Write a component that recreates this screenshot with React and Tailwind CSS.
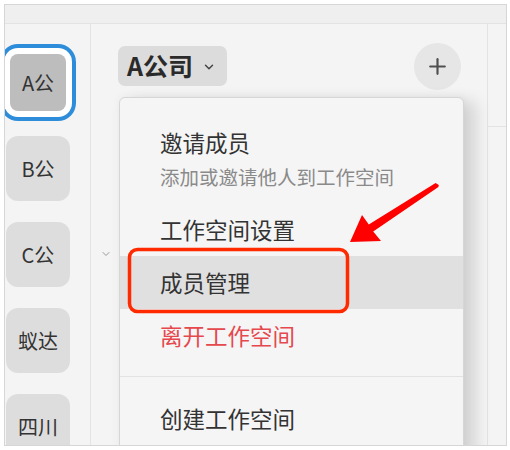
import { Plus, ChevronDown } from "lucide-react";

const companies = [
  { name: "A公", active: true },
  { name: "B公" },
  { name: "C公" },
  { name: "蚁达" },
  { name: "四川" },
];

// Sidebar company tile
const Tile = ({ name, active }) => {
  if (active) {
    return (
      <div className="w-[64px] h-[65px] flex items-center justify-center shrink-0">
        <div className="w-[56px] h-[57px] rounded-[8px] bg-[#bdbdbd] flex items-center justify-center text-[20px] text-[#333] shadow-[0_0_0_6px_#ffffff,0_0_0_10px_#2d8ddb]">
          {name}
        </div>
      </div>
    );
  }
  return (
    <div className="w-[64px] h-[65px] rounded-[12px] bg-[#dddddd] flex items-center justify-center text-[20px] text-[#333] shrink-0">
      {name}
    </div>
  );
};

export default function App() {
  return (
    <div
      className="w-[510px] h-[450px] bg-white pt-[4px] pl-[4px] overflow-hidden"
      style={{ fontFamily: '"Noto Sans CJK SC", "Noto Sans", sans-serif' }}
    >
      <div className="relative w-[503px] h-[442px] border-[1.5px] border-[#d6d6d6] bg-[#f4f4f4] overflow-hidden flex flex-col">
        {/* top bar */}
        <div className="h-[19px] shrink-0 bg-[#efefef] border-b border-[#e3e3e3]" />

        <div className="flex flex-1 min-h-0">
          {/* sidebar */}
          <div className="w-[86px] shrink-0 border-r border-[#e3e3e3] pl-[1px] pt-[26px] flex flex-col gap-[21px]">
            {companies.map((c) => (
              <Tile key={c.name} {...c} />
            ))}
          </div>

          {/* main */}
          <div className="w-[397px] shrink-0 border-r border-[#e3e3e3] flex flex-col">
            <div className="h-[84px] flex items-center justify-between pl-[27px] pr-[26px]">
              <button className="h-[40px] pl-[9px] pr-[11px] rounded-[7px] bg-[#dcdcdc] flex items-center gap-[9px] text-[25px] font-bold text-[#2a2a2a]">
                A公司
                <ChevronDown size={14} strokeWidth={2.5} className="text-[#444] mt-[2px]" />
              </button>
              <button className="w-[47px] h-[47px] rounded-full bg-[#e6e6e6] flex items-center justify-center text-[#505050]">
                <Plus size={25} strokeWidth={2.1} />
              </button>
            </div>
            <div className="pl-[9px] pt-[140px]">
              <ChevronDown size={12} strokeWidth={1.8} className="text-[#8e8e8e]" />
            </div>
          </div>

          {/* right column */}
          <div className="flex-1 flex flex-col">
            <div className="h-[103px] border-b border-[#e3e3e3]" />
          </div>
        </div>

        {/* dropdown menu */}
        <div className="absolute left-[114px] top-[92px] w-[345px] h-[400px] bg-[#f5f5f5] border border-[#d6d6d6] rounded-[6px] shadow-[12px_4px_16px_rgba(0,0,0,0.13),0_0_10px_rgba(0,0,0,0.05)] text-[#333]">
          <div className="h-[105px] pl-[40px] pt-[29px] flex flex-col">
            <div className="text-[22.5px] leading-[30px]">邀请成员</div>
            <div className="mt-[7px] text-[19.5px] leading-[26px] text-[#8a8a8a]">添加或邀请他人到工作空间</div>
          </div>
          <div className="h-[53px] pl-[40px] flex items-center text-[22.5px]">工作空间设置</div>
          <div className="h-[53px] pl-[40px] flex items-center text-[22.5px] bg-[#e0e0e0]">成员管理</div>
          <div className="h-[53px] pl-[40px] flex items-center text-[22.5px] text-[#e5484d]">离开工作空间</div>
          <div className="mt-[14px] border-t border-[#e2e2e2]" />
          <div className="mt-[15px] h-[53px] pl-[40px] flex items-center text-[22.5px]">创建工作空间</div>
        </div>

        {/* annotation: red box + arrow */}
        <svg className="absolute left-[-5.5px] top-[-5.5px] pointer-events-none" width="510" height="450" viewBox="0 0 510 450">
          <rect x="129.5" y="249.5" width="218" height="62" rx="8" fill="none" stroke="#ff2a00" strokeWidth="3.5" />
          <polygon
            points="350,242 362,215 368.8,224.6 435.6,182.9 438.8,185 438.4,187.1 373.2,231.4 381,241"
            fill="#ff0000"
          />
        </svg>
      </div>
    </div>
  );
}
